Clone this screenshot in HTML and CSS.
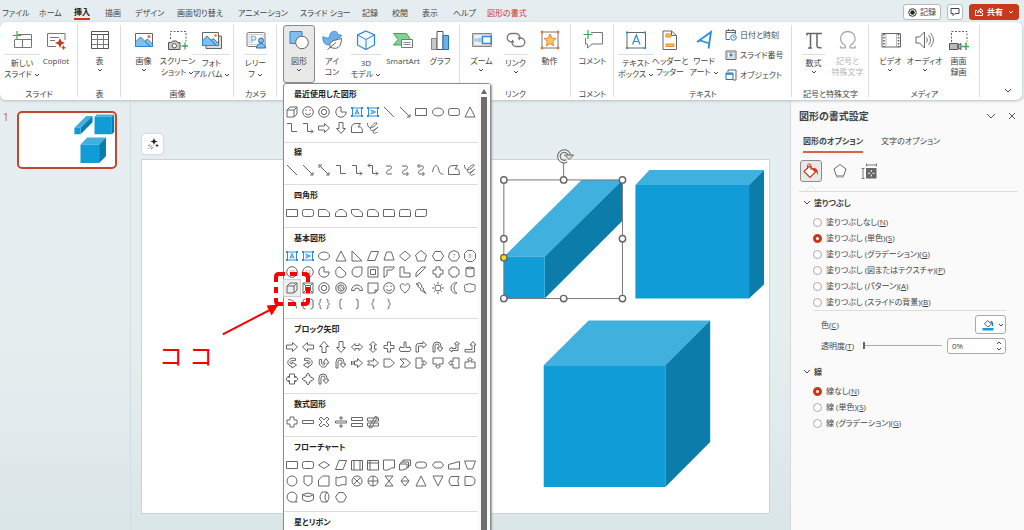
FILE: index.html
```html
<!DOCTYPE html>
<html lang="ja">
<head>
<meta charset="utf-8">
<title>プレゼンテーション</title>
<link rel="stylesheet" href="styles.css">
</head>
<body>
<svg class="defs" aria-hidden="true">
  <symbol id="cubes" viewBox="0 0 629 354">
    <path fill="#40b0de" d="M363 97L441 20H482L404 97ZM495 25L509 10H624L609 25ZM403 206L448 161H570L525 206Z"/>
    <path fill="#0c7dab" d="M404 97L482 20V61L404 139ZM609 25L624 10V125L609 139ZM525 206L570 161V283L525 328Z"/>
    <path fill="#109dd7" d="M363 97H404V139H363ZM495 25H609V139H495ZM403 206H525V328H403Z"/>
  </symbol>
  <symbol id="chev" viewBox="0 0 6 4"><path d="M1 1l2 2 2-2" fill="none" stroke="currentColor"/></symbol>
</svg>

<header class="topbar">
  <nav class="tabs">
    <button class="tab">ファイル</button><button class="tab">ホーム</button><button class="tab tab-active">挿入</button><button class="tab">描画</button><button class="tab">デザイン</button><button class="tab">画面切り替え</button><button class="tab">アニメーション</button><button class="tab">スライド ショー</button><button class="tab">記録</button><button class="tab">校閲</button><button class="tab">表示</button><button class="tab">ヘルプ</button><button class="tab tab-context">図形の書式</button>
  </nav>
  <div class="top-actions">
    <button class="pill"><svg width="9" height="9" viewBox="0 0 9 9"><circle cx="4.500" cy="4.500" r="3.800" fill="none" stroke="#333"/><circle cx="4.500" cy="4.500" r="2.200" fill="#222"/></svg>記録</button>
    <button class="pill pill-icon" aria-label="コメント"><svg width="10" height="10" viewBox="0 0 10 10"><path d="M1 1.500h8v5H5L3 8.500v-2H1z" fill="none" stroke="#444"/></svg></button>
    <button class="pill pill-share"><svg width="10" height="10" viewBox="0 0 10 10"><path d="M3 3.500H1.500v5h7V6M3.500 6c0-2 1-3 3-3V1.500L9 3.800 6.500 6V4.500c-1.500 0-2.500.5-3 1.500z" fill="none" stroke="#fff"/></svg>共有<svg class="chev"><use href="#chev"/></svg></button>
  </div>
</header>

<section class="ribbon">
  <div class="group">
    <div class="commands">
      <button class="cmd cmd-split"><svg class="ico" viewBox="0 0 20 20"><path d="M6 4.500h13.500v13h-17V10M2.500 9.500h17M10.500 9.500v8" fill="none" stroke="#777"/><path d="M5 1v9M.5 5.500h9" stroke="#3aa757" stroke-width="1.200"/></svg><span class="label">新しい<br>スライド<svg class="chev"><use href="#chev"/></svg></span></button>
      <button class="cmd"><svg class="ico" viewBox="0 0 20 20"><path d="M19 10V3.500H1.500v13H10M4 7.500h9M4 10.500h5" fill="none" stroke="#777"/><path d="M14 8l1.500 3.500L19 13l-3.500 1.500L14 18l-1.500-3.500L9 13l3.500-1.500zM17.500 15l.8 2 1.700.8-1.700.7-.8 1.500-.8-1.500-1.700-.7 1.700-.8z" fill="#c8391b"/></svg><span class="label">Copilot</span></button>
    </div>
    <h2 class="group-name">スライド</h2>
  </div>
  <div class="group">
    <div class="commands">
      <button class="cmd"><svg class="ico" viewBox="0 0 20 20"><path d="M1.500 1.500h17v17h-17z" fill="#fff" stroke="#555"/><path d="M1.500 4.500h17" stroke="#555"/><path d="M1.500 9.500h17M1.500 14.500h17M7.500 4.500v14M13.500 4.500v14" stroke="#777"/></svg><span class="label">表<br><svg class="chev chev-alone"><use href="#chev"/></svg></span></button>
    </div>
    <h2 class="group-name">表</h2>
  </div>
  <div class="group">
    <div class="commands">
      <button class="cmd"><svg class="ico" viewBox="0 0 20 20"><path d="M1.500 3.500h17v13h-17z" fill="#fff" stroke="#666"/><path d="M1.500 12l5-5 9.500 9.500H1.500zM11 11l2.500-2 5 5v2.500H16z" fill="#83bdec" stroke="#2f87cf"/><circle cx="15" cy="6.500" r="1.500" fill="#e8792b"/></svg><span class="label">画像<br><svg class="chev chev-alone"><use href="#chev"/></svg></span></button>
      <button class="cmd"><svg class="ico" viewBox="0 0 20 20"><path d="M2.500 9V1.500h15.500v10" fill="none" stroke="#666" stroke-dasharray="2 1.500"/><path d="M.5 12.500h3l1-1.500h4l1 1.500H12v7H.5z" fill="#ccc" stroke="#555"/><circle cx="6.300" cy="15.800" r="2.200" fill="#fff" stroke="#555"/><path d="M17 12.500v7M13.500 16H20" stroke="#3aa757" stroke-width="1.300"/></svg><span class="label">スクリーン<br>ショット<svg class="chev"><use href="#chev"/></svg></span></button>
      <button class="cmd cmd-split"><svg class="ico" viewBox="0 0 20 20"><path d="M4 16v2.500h15.500V6H17" fill="#ddd" stroke="#666"/><path d="M.5 2.500h16v13H.5z" fill="#fff" stroke="#666"/><path d="M.5 11l4.500-5 9 9.500H.5zM9 10l2.500-1.500 5 5v2H14z" fill="#83bdec" stroke="#2f87cf"/><circle cx="13.500" cy="5.500" r="1.300" fill="#e8792b"/></svg><span class="label">フォト<br>アルバム<svg class="chev"><use href="#chev"/></svg></span></button>
    </div>
    <h2 class="group-name">画像</h2>
  </div>
  <div class="group">
    <div class="commands">
      <button class="cmd cmd-split"><svg class="ico" viewBox="0 0 20 20"><rect x="1" y="2.500" width="18" height="14" rx="1.500" fill="#fff" stroke="#777"/><path d="M3 4.500h14v10H3z" fill="none" stroke="#ccc"/><path d="M5.500 13V6.500h2.500a1.700 1.700 0 0 1 0 3.500H5.500" fill="none" stroke="#83bdec" stroke-width="1.500"/><circle cx="15" cy="10.500" r="2.500" fill="#83bdec" stroke="#2173b8"/><path d="M10.500 18c0-6 9-6 9 0z" fill="#83bdec" stroke="#2173b8"/></svg><span class="label">レリー<br>フ<svg class="chev"><use href="#chev"/></svg></span></button>
    </div>
    <h2 class="group-name">カメラ</h2>
  </div>
  <div class="group group-illust">
    <div class="commands">
      <div class="menu-anchor">
        <button class="cmd cmd-open" aria-expanded="true"><svg class="ico" viewBox="0 0 20 20"><path d="M1 1.500h12v12H1z" fill="#83bdec" stroke="#2f87cf"/><circle cx="13" cy="12.500" r="6.300" fill="#fff" stroke="#666"/></svg><span class="label">図形<br><svg class="chev chev-alone"><use href="#chev"/></svg></span></button>
        <div class="menu">
          <div class="gallery" id="gallery"></div>
          <div class="scrollbar"><span class="scroll-up"></span><span class="scroll-thumb"></span></div>
        </div>
      </div>
      <button class="cmd"><svg class="ico" viewBox="0 0 20 20"><path d="M7.500 7.500C7.500 3.500 9.500 1 12.500 1.200c2.300.2 3.500 1.800 3.500 3.600l3.500.4c-.3 2-2 2.800-4 2.800C15 10 13 12.500 10 13.500l-4 1.500C2 14.500.3 11 1 6.500c2 1.500 4 1.800 6.500 1z" fill="#6fb0e6" stroke="#2f87cf" stroke-width=".8"/><path d="M8 17c-1.500-6 4-6.500 11.500-8.500C19.500 17 15 20.500 8 17zM5.500 19.500L14 12.500" fill="#fff" stroke="#666"/></svg><span class="label">アイ<br>コン</span></button>
      <button class="cmd cmd-split"><svg class="ico" viewBox="0 0 20 20"><path d="M10 1l8.500 4v10L10 19.500 1.500 15V5z" fill="#f2f9ff" stroke="#2f87cf" stroke-width="1.200"/><path d="M1.500 5L10 9.500 18.500 5M10 9.500v10" fill="none" stroke="#2f87cf"/></svg><span class="label">3D<br>モデル<svg class="chev"><use href="#chev"/></svg></span></button>
      <button class="cmd cmd-wide"><svg class="ico" viewBox="0 0 20 20"><path d="M.5 3.500h13l4 6-4 5.500H.5L5 9.500z" fill="#86cf98" stroke="#3aa757"/><path d="M8.500 9.500h11v8h-11z" fill="#fff" stroke="#777"/><path d="M10.500 12.500h7M10.500 14.500h7" stroke="#888"/></svg><span class="label">SmartArt</span></button>
      <button class="cmd"><svg class="ico" viewBox="0 0 20 20"><path d="M1.500 8.500H7v11H1.500z" fill="#c8c8c8" stroke="#888"/><path d="M7 1.500h6v18H7z" fill="#fff" stroke="#555"/><path d="M13 5.500h5.500v14H13z" fill="#6fb0e6" stroke="#2173b8"/></svg><span class="label">グラフ</span></button>
    </div>
  </div>
  <div class="group">
    <div class="commands">
      <button class="cmd"><svg class="ico" viewBox="0 0 20 20"><path d="M.5 3.500h19v13H.5z" fill="#ccc" stroke="#888"/><path d="M2 5h16v3L3 9zM2 15h16v-3L3 11z" fill="#eee"/><path d="M3 9l8-2v6l-8-2z" fill="#9bd0f2"/><path d="M10.500 6.500h8.500v7h-8.500z" fill="#fff" stroke="#2f87cf" stroke-width="1.300"/></svg><span class="label">ズーム<br><svg class="chev chev-alone"><use href="#chev"/></svg></span></button>
      <button class="cmd cmd-split"><svg class="ico" viewBox="0 0 20 20"><path d="M8 12H5.500a4 4 0 0 1 0-8.500H10a4 4 0 0 1 3 6.500M12 8h2.500a4 4 0 0 1 0 8.500H10A4 4 0 0 1 7 10" fill="none" stroke="#777" stroke-width="1.300"/></svg><span class="label">リンク<br><svg class="chev chev-alone"><use href="#chev"/></svg></span></button>
      <button class="cmd"><svg class="ico" viewBox="0 0 20 20"><path d="M2 2h16v16H2z" fill="#fff" stroke="#777"/><path d="M10 4l1.800 4 4.200.5-3.200 3 .8 4.300-3.600-2.200-3.600 2.200.8-4.300-3.200-3 4.200-.5z" fill="#fbc36b" stroke="#e8892b"/><path d="M.8.8h2.400v2.400H.8zM16.800.8h2.400v2.400h-2.400zM.8 16.800h2.400v2.400H.8zM16.800 16.800h2.400v2.400h-2.400z" fill="#e8722b"/></svg><span class="label">動作</span></button>
    </div>
    <h2 class="group-name">リンク</h2>
  </div>
  <div class="group">
    <div class="commands">
      <button class="cmd"><svg class="ico" viewBox="0 0 20 20"><path d="M8 2.500h11.500v11.500H9L4.500 18v-4h-2V8" fill="none" stroke="#777"/><path d="M5 0v9M.5 4.500h9" stroke="#3aa757" stroke-width="1.200"/></svg><span class="label">コメント</span></button>
    </div>
    <h2 class="group-name">コメント</h2>
  </div>
  <div class="group">
    <div class="commands">
      <button class="cmd cmd-split"><svg class="ico" viewBox="0 0 20 20"><path d="M1 2.500h18.500v15.500H1z" fill="#fff" stroke="#666"/><path d="M6.500 14.500L10.300 5l3.700 9.500M7.800 11.500h5" fill="none" stroke="#2b8fdc" stroke-width="1.200"/><path d="M0 1.500h2v2H0zM18 1.500h2v2h-2zM0 17h2v2H0zM18 17h2v2h-2z" fill="#2b8fdc"/></svg><span class="label">テキスト<br>ボックス<svg class="chev"><use href="#chev"/></svg></span></button>
      <button class="cmd"><svg class="ico" viewBox="0 0 20 20"><path d="M3 1h8.500l5 4.500v14H3z" fill="#fff" stroke="#666"/><path d="M11.500 1v4.500h5" fill="none" stroke="#666"/><path d="M6 4h5v3H6zM6 14h8v2.500H6z" fill="#fbc36b" stroke="#e8892b"/></svg><span class="label">ヘッダーと<br>フッター</span></button>
      <button class="cmd"><svg class="ico" viewBox="0 0 20 20"><path d="M3 12L17 2l-2.500 16.500M3 12l3-1.500 9.500 3" fill="none" stroke="#2b8fdc" stroke-width="1.800"/></svg><span class="label">ワード<br>アート<svg class="chev"><use href="#chev"/></svg></span></button>
      <div class="stack">
        <button class="mini"><svg width="12" height="12" viewBox="0 0 12 12"><path d="M5 10.500H1v-9h9.500V5M1 3.500h9.500M3.500 0v2M8 0v2" fill="none" stroke="#666"/><circle cx="8.500" cy="8.500" r="2.800" fill="#eaf5fd" stroke="#2b8fdc"/><path d="M8.500 7v1.500H10" fill="none" stroke="#2b8fdc" stroke-width=".7"/></svg>日付と時刻</button>
        <button class="mini"><svg width="12" height="12" viewBox="0 0 12 12"><path d="M1 2h10v8.500H1z" fill="#fff" stroke="#666"/><path d="M2.500 3.500h7V9h-7z" fill="none" stroke="#bbb"/><path d="M4.500 4.500h3v3h-3z" fill="#2b8fdc"/></svg>スライド番号</button>
        <button class="mini"><svg width="12" height="12" viewBox="0 0 12 12"><path d="M3 3V1h8v10H8" fill="none" stroke="#666"/><path d="M1 4h7v6.500H1z" fill="#fff" stroke="#2b6fb0"/><path d="M1 5h7" stroke="#2b8fdc" stroke-width="1.800"/></svg>オブジェクト</button>
      </div>
    </div>
    <h2 class="group-name">テキスト</h2>
  </div>
  <div class="group">
    <div class="commands">
      <button class="cmd cmd-split"><svg class="ico" viewBox="0 0 20 20"><path d="M3 5.500V3.500h15M6.500 3.500v14.500M4 18h4M13 3.500V16c0 1.500 2 2.200 4.500 1.500" fill="none" stroke="#666" stroke-width="1.500"/></svg><span class="label">数式<br><svg class="chev chev-alone"><use href="#chev"/></svg></span></button>
      <button class="cmd cmd-off" disabled><svg class="ico" viewBox="0 0 20 20"><path d="M2.500 16v1.800h5V16C4 13.500 2.500 11.500 2.500 8.500a7.300 7 0 0 1 14.600 0c0 3-1.500 5-5 7.500v1.800h5V16" fill="none" stroke="#aaa" stroke-width="1.300"/></svg><span class="label">記号と<br>特殊文字</span></button>
    </div>
    <h2 class="group-name">記号と特殊文字</h2>
  </div>
  <div class="group">
    <div class="commands">
      <button class="cmd"><svg class="ico" viewBox="0 0 20 20"><path d="M1 3.500h18.500v13.500H1z" fill="#fff" stroke="#666"/><path d="M3 4v13M17.500 4v13" stroke="#555" stroke-width="1.500" stroke-dasharray="1.500 1.500"/><path d="M5 4v13M15.500 4v13" stroke="#999" stroke-width=".7"/></svg><span class="label">ビデオ<br><svg class="chev chev-alone"><use href="#chev"/></svg></span></button>
      <button class="cmd"><svg class="ico" viewBox="0 0 20 20"><path d="M1 7h3.500l5-5v16l-5-5H1z" fill="none" stroke="#666"/><path d="M11.500 7.500q2 2.500 0 5M13.500 5q4 5 0 10M15.500 3q6 7 0 14" fill="none" stroke="#777"/></svg><span class="label">オーディオ<br><svg class="chev chev-alone"><use href="#chev"/></svg></span></button>
      <button class="cmd"><svg class="ico" viewBox="0 0 20 20"><path d="M2.500 12V1.500h15.500v10" fill="none" stroke="#666" stroke-dasharray="2 1.500"/><path d="M.5 13.500H9v6H.5zM9 15l3-1.500v6L9 18z" fill="#bbb" stroke="#555"/><path d="M17 12.500v8M13 16.500h7.500" stroke="#3aa757" stroke-width="1.500"/></svg><span class="label">画面<br>録画</span></button>
    </div>
    <h2 class="group-name">メディア</h2>
  </div>
  <div class="group group-last"><button class="collapse" aria-label="リボンを折りたたむ"><svg width="8" height="6" viewBox="0 0 8 6"><path d="M1 1l3 3 3-3" fill="none" stroke="#444"/></svg></button></div>
</section>

<main class="workspace">
  <aside class="thumbs">
    <span class="thumb-no">1</span>
    <button class="thumb" aria-label="スライド 1"><svg viewBox="0 0 629 354"><use href="#cubes"/></svg></button>
  </aside>
  <div class="stage">
    <button class="designer" aria-label="デザイナー"><svg width="12" height="12" viewBox="0 0 12 12"><path d="M7 0l1 2.500L10.500 3.500 8 4.500 7 7 6 4.500 3.500 3.500 6 2.500zM10 5.500l.6 1.400 1.400.6-1.400.6L10 9.500l-.6-1.400L8 7.500l1.400-.6z" fill="#222"/><path d="M1 8l3-2M1.500 10.500l4-3M4 11l3-2.500" stroke="#444" stroke-dasharray="1 .8"/></svg></button>
    <div class="slide">
      <svg class="slide-art" viewBox="0 0 629 354">
        <use href="#cubes"/>
        <path d="M363 20H482V139H363ZM423 20V2" fill="none" stroke="#777"/>
        <g fill="#fff" stroke="#666" stroke-width="1.400">
          <circle cx="363" cy="20" r="3.200"/><circle cx="423" cy="20" r="3.200"/><circle cx="482" cy="20" r="3.200"/>
          <circle cx="363" cy="79" r="3.200"/><circle cx="482" cy="79" r="3.200"/>
          <circle cx="363" cy="139" r="3.200"/><circle cx="423" cy="139" r="3.200"/><circle cx="482" cy="139" r="3.200"/>
          <circle cx="363" cy="98" r="3.200" fill="#ffe000"/>
        </g>
        <path d="M426 1A5.300 5.300 0 1 1 428.800-4" fill="none" stroke="#666" stroke-width="3.600"/>
        <path d="M426 1A5.300 5.300 0 1 1 428.800-4" fill="none" stroke="#f4f4f4" stroke-width="1.500"/>
        <path d="M424-5h9l-4.500 4.500z" fill="#ddd" stroke="#666"/>
        <path d="M81 175L129 150" stroke="#f60000" stroke-width="2"/>
        <path d="M137 145L125 146L130 156Z" fill="#f60000"/>
        <text class="note" x="17" y="206">コ コ</text>
      </svg>
    </div>
  </div>

  <aside class="pane">
    <header class="pane-head">
      <h1 class="pane-title">図形の書式設定</h1>
      <button class="plain" aria-label="オプション"><svg width="10" height="10" viewBox="0 0 10 10"><path d="M1 3l4 4 4-4" fill="none" stroke="#555"/></svg></button>
      <button class="plain" aria-label="閉じる"><svg width="8" height="8" viewBox="0 0 8 8"><path d="M1 1l6 6M7 1L1 7" stroke="#555"/></svg></button>
    </header>
    <div class="pane-tabs"><button class="ptab ptab-on">図形のオプション</button><button class="ptab">文字のオプション</button></div>
    <div class="icon-tabs">
      <button class="itab itab-on" aria-label="塗りつぶしと線"><svg width="18" height="18" viewBox="0 0 18 18"><path d="M7.500 4l6 6L8 15.500 2 9.500z" fill="#fff" stroke="#c8391b" stroke-width="1.200"/><path d="M5.500 7V3.500c0-2 3.500-2 3.500 0V8" fill="none" stroke="#c8391b"/><path d="M10.500 6c4-.5 6 2 5.500 7.500-1-3-2-4-3-4.500z" fill="#c8391b"/></svg></button>
      <button class="itab" aria-label="効果"><svg width="16" height="18" viewBox="0 0 16 18"><path d="M8 2.500l6 4.500-2.500 7h-7L2 7z" fill="#fff" stroke="#666"/><path d="M4 14.500h8" stroke="#aaa" stroke-width="2"/></svg></button>
      <button class="itab" aria-label="サイズとプロパティ"><svg width="16" height="16" viewBox="0 0 16 16"><path d="M5.500 2h10M5.500.5v3M15.500.5v3M2 5.500v10M.5 5.500h3M.5 15.500h3" stroke="#777"/><path d="M5 5h10.500v10.500H5z" fill="#666"/><path d="M10.300 7v2M10.300 11.500v2M7 10.300h2M11.500 10.300h2" stroke="#fff"/></svg></button>
    </div>
    <div class="rule"><svg width="10" height="6" viewBox="0 0 10 6"><path d="M0 5.500L5 .8l5 4.700" fill="#fafafa" stroke="#ddd"/></svg></div>

    <h2 class="sect"><svg width="8" height="6" viewBox="0 0 8 6"><path d="M1 1l3 3 3-3" fill="none" stroke="#444"/></svg>塗りつぶし</h2>
    <div class="radios">
      <label class="radio"><input type="radio" name="fill">塗りつぶしなし(<u>N</u>)</label>
      <label class="radio"><input type="radio" name="fill" checked>塗りつぶし (単色)(<u>S</u>)</label>
      <label class="radio"><input type="radio" name="fill">塗りつぶし (グラデーション)(<u>G</u>)</label>
      <label class="radio"><input type="radio" name="fill">塗りつぶし (図またはテクスチャ)(<u>P</u>)</label>
      <label class="radio"><input type="radio" name="fill">塗りつぶし (パターン)(<u>A</u>)</label>
      <label class="radio"><input type="radio" name="fill">塗りつぶし (スライドの背景)(<u>B</u>)</label>
    </div>
    <div class="fields">
      <div class="field">
        <span class="field-name" id="color-name">色(<u>C</u>)</span>
        <button class="color" aria-labelledby="color-name"><svg width="12" height="12" viewBox="0 0 12 12"><path d="M5.500 1.500l4 3.500-3.500 3-3.500-3z" fill="#fff" stroke="#666"/><path d="M8.500 2.500q2.500.5 2 4.500" fill="none" stroke="#2173b8" stroke-width="1.300"/><path d="M.5 9h11v2.500H.5z" fill="#109dd7"/></svg><svg class="chev"><use href="#chev"/></svg></button>
      </div>
      <div class="field">
        <label class="field-name" for="alpha">透明度(<u>T</u>)</label>
        <input class="slider" id="alpha" type="range" value="0">
        <div class="spin">
          <input class="spin-box" type="text" value="0%" aria-label="透明度の値">
          <div class="spin-btns"><button class="step step-up" aria-label="増やす"><svg class="chev"><use href="#chev"/></svg></button><button class="step" aria-label="減らす"><svg class="chev"><use href="#chev"/></svg></button></div>
        </div>
      </div>
    </div>
    <h2 class="sect"><svg width="8" height="6" viewBox="0 0 8 6"><path d="M1 1l3 3 3-3" fill="none" stroke="#444"/></svg>線</h2>
    <div class="radios">
      <label class="radio"><input type="radio" name="line" checked>線なし(<u>N</u>)</label>
      <label class="radio"><input type="radio" name="line">線 (単色)(<u>S</u>)</label>
      <label class="radio"><input type="radio" name="line">線 (グラデーション)(<u>G</u>)</label>
    </div>
  </aside>
</main>
<script src="gallery.js"></script>
</body>
</html>
```

FILE: styles.css
```css
* { box-sizing: border-box; }

body {
  margin: 0;
  height: 100vh;
  overflow: hidden;
  display: flex;
  flex-direction: column;
  background: linear-gradient(#e5edf0, #e7eef0 60%, #dbe6e8);
  color: #444;
  font: 8px/12px "Open Sans", "Noto Sans CJK JP", sans-serif;
  font-feature-settings: "palt";
}

button, input {
  font: inherit;
  font-feature-settings: inherit;
  color: inherit;
  margin: 0;
}

button {
  padding: 0;
  border: 0;
  background: none;
  white-space: nowrap;
}

h1, h2, h3 { margin: 0; font-size: inherit; }

svg { display: block; flex: none; }

.defs { position: absolute; width: 0; height: 0; }

.chev { display: inline-block; width: 6px; height: 4px; margin-left: 2px; vertical-align: middle; }

/* Top bar */
.topbar { display: flex; justify-content: space-between; height: 22px; flex: none; }

.tabs {
  display: grid;
  grid-template-columns: 37px 35px 31px 30px 42px 61px 62px 62px 30px 30px 31px 34px 50px;
  padding-left: 2px;
}

.tab { display: flex; align-items: center; height: 20px; padding-top: 6px; justify-self: start; }
.tab-active { font-weight: 700; border-bottom: 2px solid #c8391b; color: #222; }
.tab-context { color: #c8391b; }

.top-actions { display: flex; gap: 6px; padding: 4px 5px 0 0; }

.pill {
  display: flex;
  align-items: center;
  gap: 3px;
  height: 16px;
  padding: 0 4px;
  border: 1px solid #b5babc;
  border-radius: 3px;
  background: #fff;
}
.pill-icon { padding: 0 2px; }
.pill-share { background: #c8391b; border-color: #c8391b; color: #fff; font-weight: 700; }

/* Ribbon */
.ribbon {
  position: relative;
  z-index: 2;
  flex: none;
  display: grid;
  grid-template-columns: 78fr 43fr 113fr 43fr 183fr 111fr 43fr 178fr 77fr 111fr 42fr;
  height: 78px;
  margin-right: 2px;
  background: #fff;
  border-radius: 6px;
  box-shadow: 0 1px 3px #b4bdc0;
}

.group { position: relative; min-width: 0; display: flex; flex-direction: column; }
.group::after {
  content: "";
  position: absolute;
  right: 0;
  top: 3px;
  bottom: 3px;
  border-right: 1px solid #dcdcdc;
}
.group-illust::after { bottom: 17px; }
.group-last::after { display: none; }
.group-last { align-items: flex-end; justify-content: flex-end; padding: 0 10px 6px 0; }

.commands { display: flex; justify-content: center; flex: 1; padding-top: 3px; }
.group-illust .commands { justify-content: flex-start; padding-left: 6px; }
.group-name { height: 12px; text-align: center; font-weight: 400; white-space: nowrap; }

.cmd {
  display: flex;
  flex-direction: column;
  align-items: center;
  width: 34px;
  height: 58px;
  padding-top: 5px;
  line-height: 11px;
}
.cmd-wide { width: 40px; }
.cmd-off { color: #b5b5b5; }
.ico { width: 20px; height: 20px; margin-bottom: 4px; }
.label { display: block; border-top: 1px solid transparent; }
.cmd-split .label { padding-top: 2px; min-width: 23px; border-top-color: #ddd; }
.chev-alone { display: block; margin: 2px auto 0; }
.cmd-open { width: 32px; background: #e8e8e8; border: 1px solid #8c8c8c; border-radius: 3px; padding-top: 4px; }

.stack { display: flex; flex-direction: column; gap: 8px; padding: 4px 0 0 4px; width: 66px; }
.mini { display: flex; align-items: center; gap: 3px; height: 12px; }

/* Shape gallery menu */
.menu-anchor { position: relative; }
.menu {
  position: absolute;
  top: 58px;
  left: 0;
  width: 208px;
  display: flex;
  background: #fff;
  border: 1px solid #8c8c8c;
  border-radius: 3px;
  box-shadow: 1px 1px 2px #999;
}
.gallery { flex: 1; }
.shape-set { padding-bottom: 6px; border-bottom: 1px solid #ddd; }
.shape-set:first-child { margin-bottom: -1px; }
.shape-title { height: 20px; padding: 4px 0 0 10px; color: #222; line-height: 12px; }
.shape-grid { display: grid; grid-template-columns: repeat(12, 1fr); }
.shape { position: relative; display: flex; justify-content: center; height: 16px; }
.shape svg { width: 16px; height: 16px; fill: none; stroke: #666; stroke-width: 1; }
.shape text { fill: #777; stroke: none; font-size: 5px; text-anchor: middle; }
.shape .blue { stroke: #2b8fdc; }
.shape-marked { background: #eee; outline: 1px solid #ccc; }
.marker { position: absolute; z-index: 3; inset: -8px -10px -10px -10px; }
.shape .marker { width: 36px; height: 34px; stroke: #f60000; stroke-width: 4; }

.scrollbar { width: 12px; padding: 5px 3px 0; display: flex; flex-direction: column; gap: 3px; background: #fafafa; }
.scroll-up { border: 3px solid transparent; border-top: 0; border-bottom: 5px solid #666; }
.scroll-thumb { flex: 1; background: #6e6e6e; }

.collapse { display: flex; }

/* Workspace */
.workspace { flex: 1; min-height: 0; display: flex; }

.thumbs { width: 131px; display: flex; align-items: flex-start; gap: 10px; padding: 11px 0 0 3px; border-right: 1px solid #d5dcde; }
.thumb-no { color: #d0563c; font-size: 10px; width: 4px; }
.thumb { width: 100px; border: 2px solid #c0492c; border-radius: 5px; background: #fff; overflow: hidden; }

.stage { flex: 1; min-width: 0; padding: 34px 20px 0 10px; }
.designer {
  display: flex;
  align-items: center;
  justify-content: center;
  width: 21px;
  height: 20px;
  margin: 0 0 5px 1px;
  background: #fff;
  border-radius: 4px;
  box-shadow: 0 0 2px #b0b0b0;
}
.slide { background: #fff; border: 1px solid #cdd3d5; }
.slide-art { width: 100%; overflow: visible; }
.note { fill: #f60000; font-size: 24px; font-feature-settings: normal; }

/* Format pane */
.pane { width: 234px; padding: 1px 0 0 8px; background: #fafafa; border-left: 1px solid #d8d8d8; }
.pane-head { display: flex; align-items: center; gap: 12px; height: 30px; padding-right: 8px; }
.pane-title { flex: 1; font-size: 10px; }
.plain { display: flex; }

.pane-tabs { display: flex; gap: 18px; padding-left: 4px; }
.ptab { height: 22px; padding-top: 0; border-bottom: 2px solid transparent; }
.ptab-on { font-weight: 700; border-bottom-color: #dc6149; }

.icon-tabs { display: flex; gap: 7px; margin: 7px 0 3px 1px; }
.itab { display: flex; align-items: center; justify-content: center; width: 22px; height: 22px; border-radius: 3px; }
.itab-on { background: #e8e8e8; border: 1px solid #8c8c8c; }

.rule { border-bottom: 1px solid #ddd; margin-right: 6px; padding-left: 7px; }

.sect { display: flex; align-items: center; gap: 3px; height: 22px; padding-left: 4px; }
.radios { padding-left: 14px; margin-right: 18px; }
.radio { display: flex; align-items: center; height: 16px; white-space: pre; }
.radio input {
  appearance: none;
  width: 9px;
  height: 9px;
  margin-right: 4px;
  border: 1px solid #aaa;
  border-radius: 50%;
  background: #fff;
}
.radio input:checked { border: 3px solid #c8391b; }

.fields { margin: 0 18px 5px 15px; padding: 3px 0 0 7px; border-top: 1px solid #ddd; }
.field { display: flex; align-items: center; justify-content: space-between; height: 21px; }
.field-name { white-space: nowrap; }
.color { display: flex; align-items: center; gap: 2px; height: 19px; width: 31px; padding-left: 6px; background: #fff; border: 1px solid #aaa; border-radius: 3px; }

.slider { appearance: none; flex: 1; min-width: 0; height: 8px; margin: 0 5px 0 9px; background: linear-gradient(#aaa, #aaa) center / 100% 1px no-repeat; }
.slider::-webkit-slider-thumb { appearance: none; width: 2px; height: 7px; background: #666; }

.spin { display: flex; width: 59px; height: 16px; background: #fff; border: 1px solid #aaa; border-radius: 3px; }
.spin-box { flex: 1; min-width: 0; padding: 0 4px; border: 0; background: none; }
.spin-btns { display: flex; flex-direction: column; justify-content: space-evenly; width: 12px; }
.step { display: flex; }
.step .chev { margin: 0 0 0 3px; }
.step-up .chev { transform: rotate(180deg); }
```

FILE: gallery.js
```js
// Outline of every shape on a 16 x 16 grid.
const outlines = {
  cube: 'M3 6h7v7H3zM3 6l3-3h7l-3 3M13 3v7l-3 3',
  smile: '<circle cx="8" cy="8" r="5.300"/><path d="M5 9.500q3 3 6 0M6 5.500v1.500M10 5.500v1.500"/>',
  donut: '<circle cx="8" cy="8" r="5.300"/><circle cx="8" cy="8" r="2.700"/>',
  pie: 'M8 8V2.800A5.200 5.200 0 1 0 13.200 8z',
  textbox: '<g class="blue"><path d="M3.500 4h9v8h-9z"/><path d="M6 10.500L8 5.500l2 5M6.500 9h3"/><path stroke-width="2" d="M2 4h2M12 4h2M2 12h2M12 12h2"/></g>',
  vtext: '<g class="blue"><path d="M3.500 4h9v8h-9z"/><path d="M5.500 6l5 2-5 2M7 6.500v3"/><path stroke-width="2" d="M2 4h2M12 4h2M2 12h2M12 12h2"/></g>',
  line: 'M3 3l10 10',
  arrow: 'M3 3l10 10M13 10v3h-3',
  arrow2: 'M3 3l10 10M13 10v3h-3M3 6V3h3',
  rect: 'M2.500 4.500h11v7h-11z',
  ellipse: '<ellipse cx="8" cy="8" rx="5.500" ry="4"/>',
  rrect: '<rect x="2.500" y="4.500" width="11" height="7" rx="2"/>',
  tri: 'M8 3l5 10H3z',
  elbow: 'M3 3.500h4.500v8H13',
  elbowA: 'M3 3.500h4.500v8H13M11 9.500l2 2-2 2',
  elbowB: 'M3 3.500h4.500v8H13M11 9.500l2 2-2 2M5 1.500l-2 2 2 2',
  rarrow: 'M2.500 6h6V3.500L13.500 8l-5 4.500V10h-6z',
  free: 'M2.500 12.500V8c0-3 1.500-4.500 4.500-4.500h4.500L9 7h2.500q2 0 2 5.500z',
  scrib: 'M2.500 3c0 5 3 6 6.500 3.500S13 2 10.500 3 5 7 5.500 9.500 10 10 13 7c-3 3-6 5-4.500 6s2.500-1 4-.500',
  conn: 'M5 4h4c3 0 1 4-1 4s-4 4-1 4h4',
  connA: 'M5 4h4c3 0 1 4-1 4s-4 4-1 4h4M9.500 10l2 2-2 2',
  connB: 'M5 4h4c3 0 1 4-1 4s-4 4-1 4h4M9.500 10l2 2-2 2M6.500 2l-2 2 2 2',
  curve: 'M2.500 10C4 2 7 2 8.500 7s2 5 5 5',
  snip1: 'M2.500 4.500H10l3.500 3.500v3.500h-11z',
  snip2: 'M2.500 11.500V8L6 4.500h4L13.500 8v3.500z',
  snipD: 'M2.500 4.500H10L13.500 8v3.500H6L2.500 8.500z',
  snipR: 'M2.500 11.500v-5q0-2 2-2H10L13.500 8v3.500z',
  round1: 'M2.500 4.500h9q2 0 2 2v5h-11z',
  round2: 'M2.500 11.500v-5q0-2 2-2h7q2 0 2 2v5z',
  roundD: 'M2.500 11.500v-5q0-2 2-2h9v5q0 2-2 2z',
  rtri: 'M3 3v10h10z',
  para: 'M6 3.500h7.500l-3.500 9H2.500z',
  trap: 'M5.500 4h5l2.500 8H3z',
  diamond: 'M8 3l5.500 5L8 13 2.500 8z',
  pent: 'M8 2.500L13.500 7l-2 6h-7l-2-6z',
  hex: 'M5 3.500h6L13.500 8 11 12.500H5L2.500 8z',
  n7: '<path d="M8 2.500l4.300 2L13.500 9l-3 4h-5l-3-4 1.200-4.500z"/><text x="8" y="10">7</text>',
  n8: '<path d="M5.500 2.500h5l3 3v5l-3 3h-5l-3-3v-5z"/><text x="8" y="10">8</text>',
  n10: '<circle cx="8" cy="8" r="5.300"/><text x="8" y="10">10</text>',
  n12: '<circle cx="8" cy="8" r="5.300"/><text x="8" y="10">12</text>',
  chord: 'M7 3a5.200 5.200 0 1 0 6 6L7 3',
  tear: 'M13 3v5A5 5 0 1 1 8 3z',
  frame: 'M3 3h10v10H3zM5.500 5.500h5v5h-5z',
  half: 'M3 3h10.500l-2.500 3H6v5l-3 2.500z',
  ell: 'M3 3h4v6h6v4H3z',
  stripe: 'M3 13V9l6-6h4z',
  plus: 'M6 3h4v3h3v4h-3v3H6v-3H3V6h3z',
  plaque: 'M5.500 3h5q0 2.500 2.500 2.500v5q-2.500 0-2.500 2.500h-5q0-2.500-2.500-2.500v-5q2.500 0 2.500-2.500z',
  can: 'M4 4v8q4 2 8 0V4Q8 2 4 4q4 2 8 0',
  bevel: 'M3 3h10v10H3zM5.500 5.500h5v5h-5zM3 3l2.500 2.500M13 3l-2.500 2.500M3 13l2.500-2.500M13 13l-2.500-2.500',
  no: '<circle cx="8" cy="8" r="5.300"/><circle cx="8" cy="8" r="3.200"/><path d="M5 6.500L9.500 11M6.500 5L11 9.500"/>',
  barc: 'M2.500 10.500a5.500 5.500 0 0 1 11 0h-3a2.500 2.500 0 0 0-5 0z',
  fold: 'M3 3h10v7l-3 3H3zM10 13v-3h3',
  heart: 'M8 13C-1 6 5 1 8 5.500 11 1 17 6 8 13z',
  bolt: 'M6.500 2.500L9 6l-1 .5 3 2.500-1 .5 3 4-6-4 1-.5L4.500 6l1.500-.5L3 4z',
  sun: '<circle cx="8" cy="8" r="3"/><path d="M8 2v2M8 12v2M2 8h2M12 8h2M4 4l1.200 1.200M12 4l-1.200 1.200M4 12l1.200-1.200M12 12l-1.200-1.200"/>',
  moon: 'M11 2.500c-8 0-8 11 0 11-4-3-4-8 0-11z',
  cloud: 'M5 4.500q3-2 5 0 4-1 3 3 1 4-3 4-2 1.500-4 0-4 1-3-3-2-4 2-4z',
  arc: 'M4 3.500q8 0 8.500 9',
  brackets: 'M5.500 3Q3 3 3 5v6q0 2 2.500 2M10.500 3Q13 3 13 5v6q0 2-2.500 2',
  braces: 'M5.500 3Q4 3 4 5v1.500L2.500 8 4 9.500V11q0 2 1.500 2M10.500 3Q12 3 12 5v1.500L13.500 8 12 9.500V11q0 2-1.500 2',
  lbr: 'M9 3Q7 3 7 5v6q0 2 2 2',
  lbrace: 'M9.500 3Q8 3 8 5v1.500L6.500 8 8 9.500V11q0 2 1.500 2',
  lr: 'M2.500 8L6 4.500v2h4v-2L13.500 8 10 11.500v-2H6v2z',
  quad: 'M6.500 3h3v3.500H13v3H9.500V13h-3V9.500H3v-3h3.500z',
  triple: 'M7 3h2v5.500h3.500V7.500l1.500 2.500-1.500 2.500H3.500L2 10l1.500-2.500v1H7z',
  bent: 'M3 13V7q0-2.500 2.500-2.500H10V2.500L13.500 6 10 9V7H5.500v6z',
  uturn: 'M3 13V7q0-4 4-4t4 4v2h2l-3 3.500L7 9h2V7q0-2-2-2T5 7v6z',
  leftup: 'M3 10.500L6 8v1.500h4V5H8.500L11 2.500 13.500 5H12v6.500H6V13z',
  bentup: 'M3 13v-2.500h7V6H8l3-3.500L14 6h-1.500v7z',
  swoop: 'M11.500 3.500C3 1.500 1 10.500 8 11.500V13l4.500-3L8 7v2C4.500 8.500 5 5 11.500 5.500z',
  striped: 'M2.500 6v4M4 6v4M5.500 6h3V3.500L13.500 8l-5 4.500V10h-3z',
  notched: 'M2.500 6h6V3.500L13.500 8l-5 4.500V10h-6L4.500 8z',
  penta: 'M3 4h6l4.500 4L9 12H3z',
  chevron: 'M3 4h6l4.500 4L9 12H3l4-4z',
  callout: 'M3 3h6v4h2V5.500L13.500 8 11 10.500V9H9v4H3z',
  callout2: 'M5.500 3h5v3.500h1V5l2.500 3-2.500 3V9.500h-1V13h-5V9.500h-1V11L2 8l2.500-3v1.500h1z',
  callout4: 'M8 2l2 2.500H9L11.500 7V6L14 8l-2.500 2V9L9 11.500h1L8 14l-2-2.500h1L4.500 9v1L2 8l2.500-2v1L7 4.500H6z',
  minus: 'M2.500 6.500h11v3h-11z',
  times: 'M5 3l3 3 3-3 2 2-3 3 3 3-2 2-3-3-3 3-2-2 3-3-3-3z',
  divide: 'M2.500 7h11v2h-11zM7 3h2v2H7zM7 11h2v2H7z',
  equal: 'M2.500 3.500h11v3h-11zM2.500 9.500h11v3h-11z',
  nequal: 'M2.500 4h11v3h-11zM2.500 9h11v3h-11zM4 13.500l6-11 2.500.5-6 11z',
  decision: 'M8 4.500L13.500 8 8 11.500 2.500 8z',
  predef: 'M2.500 3.500h11v9.500h-11zM5 3.500V13M11 3.500V13',
  internal: 'M2.500 3.500h11v9.500h-11zM5 3.500V13M2.500 6h11',
  doc: 'M2.500 3h11v8Q11 10 8 12.500q-3 1.500-5.500 0z',
  docs: 'M2.500 7h7.500v4.500q-4 2-7.500 1.500zM4 7V5h7.500v5.500H10M6 5V3h7.500v5.500h-2',
  term: '<rect x="2.500" y="5" width="11" height="6" rx="3"/>',
  prep: 'M5 5h6l2.500 3L11 11H5L2.500 8z',
  manual: 'M2.500 7.500l11-3V12h-11z',
  manop: 'M2.500 4h11L10.500 12h-5z',
  circle: '<circle cx="8" cy="8" r="5"/>',
  offpage: 'M4 3h8v7l-4 3-4-3z',
  card: 'M6.500 3H13v10H2.500V7z',
  tape: 'M3 4q2.500 2 5 0 2.500-1 5 0v8q-2.500-1-5 0-2.500 2-5 0z',
  sum: '<circle cx="8" cy="8" r="5"/><path d="M4.500 4.500l7 7M11.500 4.500l-7 7"/>',
  or: '<circle cx="8" cy="8" r="5"/><path d="M8 3v10M3 8h10"/>',
  collate: 'M4 3h8L4 13h8z',
  sort: 'M8 3l4 5-4 5-4-5zM4 8h8',
  stored: 'M5 3.500h8q-2.500 4.500 0 9H5q-4-4.500 0-9z',
  delay: 'M3 3.500h5q5 0 5 4.500t-5 4.500H3z',
  seq: 'M13.500 13H8a5 5 0 1 1 4-2v2',
  disk: 'M2.500 5.500v5q5.500 4 11 0v-5q-5.500-3-11 0 5.500 4 11 0',
  direct: 'M6 3h5q4 5 0 10H6Q2 8 6 3zM11 3Q7 8 11 13',
  display: 'M5.500 3.500h5L13.500 8l-3 5h-5l-3-5z'
};

// A suffix turns or mirrors an outline: "name@90", "name@x", "name@y".
const sets = [
  ['最近使用した図形', 'cube smile donut pie textbox vtext line arrow rect ellipse rrect tri elbow elbowA rarrow rarrow@90 free scrib'],
  ['線', 'line arrow arrow2 elbow elbowA elbowB conn connA connB curve free scrib'],
  ['四角形', 'rect rrect snip1 snip2 snipD snipR round1 round2 roundD'],
  ['基本図形', 'textbox vtext ellipse tri rtri para trap diamond pent hex n7 n8 n10 n12 pie chord tear frame half ell stripe plus plaque can cube! bevel donut no barc fold smile heart bolt sun moon cloud arc brackets braces lbr lbr@x lbrace lbrace@x'],
  ['ブロック矢印', 'rarrow rarrow@x rarrow@270 rarrow@90 lr lr@90 quad triple bent uturn leftup bentup swoop swoop@x swoop@270 uturn striped notched penta chevron callout callout@90 callout@x callout@270 callout2 callout4 uturn'],
  ['数式図形', 'plus minus times divide equal nequal'],
  ['フローチャート', 'rect rrect decision para predef internal doc docs term prep manual manop circle offpage card tape sum or collate sort tri tri@y stored delay seq disk direct display'],
  ['星とリボン', '']
];

function place(turn) {
  if (turn === 'x') return 'translate(16 0) scale(-1 1)';
  if (turn === 'y') return 'translate(0 16) scale(1 -1)';
  return `rotate(${turn || 0} 8 8)`;
}

function drawShape(entry) {
  const marked = entry.endsWith('!');
  const [name, turn] = entry.replace('!', '').split('@');
  const body = outlines[name];
  const art = body.startsWith('<') ? body : `<path d="${body}"/>`;
  const marker = marked
    ? '<svg class="marker" viewBox="0 0 36 34"><path d="M2 10V5q0-3 3-3h6M16 2h7M28 2h3q3 0 3 3v5M34 15v6M34 26v3q0 3-3 3h-4M22 32h-8M9 32H5q-3 0-3-3v-3M2 21v-6"/></svg>'
    : '';
  return `<button class="shape${marked ? ' shape-marked' : ''}" aria-label="${name}">` +
    `<svg viewBox="0 0 16 16"><g transform="${place(turn)}">${art}</g></svg>${marker}</button>`;
}

document.getElementById('gallery').innerHTML = sets.map(([title, list]) =>
  `<section class="shape-set"><h3 class="shape-title">${title}</h3>` +
  `<div class="shape-grid">${list.split(' ').filter(Boolean).map(drawShape).join('')}</div></section>`
).join('');
```
